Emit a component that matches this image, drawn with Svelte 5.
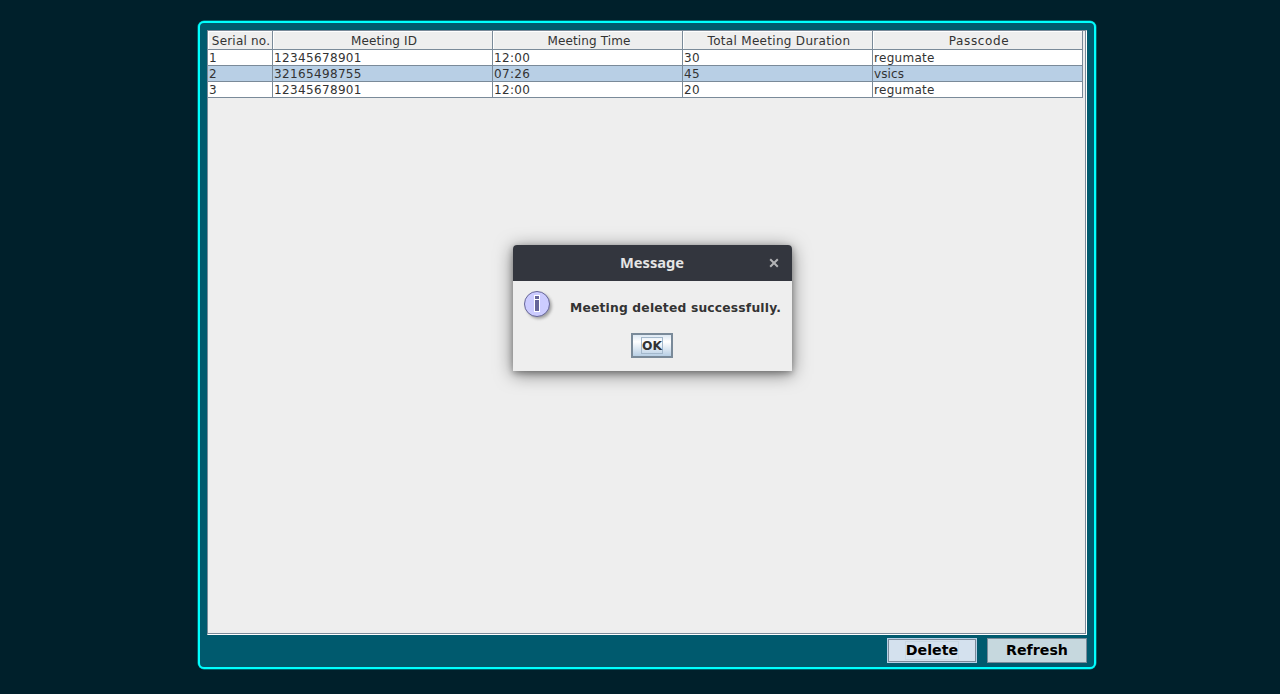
<script>
  const columns = [
    { title: 'Serial no.', spacing: 0.2 },
    { title: 'Meeting ID', spacing: 0.1 },
    { title: 'Meeting Time', spacing: 0.13 },
    { title: 'Total Meeting Duration', spacing: 0.3 },
    { title: 'Passcode', spacing: 0.65 }
  ];
  const rows = [
    ['1', '12345678901', '12:00', '30', 'regumate'],
    ['2', '32165498755', '07:26', '45', 'vsics'],
    ['3', '12345678901', '12:00', '20', 'regumate']
  ];
  let selected = $state(1);
</script>

<main>
  <section class="panel">
    <div class="scroll">
      <div class="view">
        <div class="grid head">
          {#each columns as c}
            <div class="th"><span style="letter-spacing:{c.spacing}px">{c.title}</span></div>
          {/each}
        </div>
        {#each rows as row, i}
          <div class="grid row" class:selected={i === selected}>
            {#each row as cell, j}
              <div class="td" class:num={j < 4}>{cell}</div>
            {/each}
          </div>
        {/each}
      </div>
    </div>
    <div class="actions">
      <button class="delete"><span>Delete</span></button>
      <button class="refresh"><span>Refresh</span></button>
    </div>
  </section>

  <div class="dialog" role="dialog" aria-label="Message">
    <header>
      <span class="title">Message</span>
      <svg class="close" width="10" height="10" viewBox="0 0 10 10"><path d="M1.2 1.2 8.8 8.8M8.8 1.2 1.2 8.8" stroke="#b3b4b6" stroke-width="2" fill="none" /></svg>
    </header>
    <div class="message">
      <svg width="32" height="32" viewBox="0 0 32 32">
        <defs>
          <filter id="soft" x="-30%" y="-30%" width="160%" height="160%"><feGaussianBlur stdDeviation="1.4" /></filter>
        </defs>
        <circle cx="16" cy="16" r="12.7" fill="#777" opacity=".65" filter="url(#soft)" />
        <circle cx="14" cy="14" r="12.5" fill="#ccccff" stroke="#666699" />
        <path d="M11 5h6v17h-6z" fill="#fff" />
        <path d="M12 6h4v3h-4zM12 10h4v11h-4z" fill="#666699" />
      </svg>
      <p>Meeting deleted successfully.</p>
    </div>
    <button class="ok"><span>OK</span></button>
  </div>
</main>

<style>
  :global(body) { margin: 0; background: #00202b; }
  main {
    position: relative;
    box-sizing: border-box;
    width: 1280px;
    height: 694px;
    padding: 21px 0 0 198px;
    overflow: hidden;
    background: #00202b;
    font-family: "DejaVu Sans", sans-serif;
    color: #333;
  }
  button { font-family: inherit; margin: 0; padding: 0; box-sizing: border-box; border-radius: 0; display: flex; align-items: center; justify-content: center; }
  .panel {
    box-sizing: border-box;
    width: 898px;
    height: 648px;
    border: 2px solid #00ffff;
    border-radius: 6px;
    background: #005a6e;
    padding: 7px 7px 0;
    box-shadow: 0 0 0 .5px #00a0a8;
  }
  .scroll {
    box-sizing: border-box;
    width: 880px;
    height: 605px;
    border-style: solid;
    border-width: 1px;
    border-color: #7a8a99 #fff #fff #7a8a99;
  }
  .view {
    box-sizing: border-box;
    height: 603px;
    border-right: 1px solid #7a8a99;
    border-bottom: 1px solid #7a8a99;
    background: #eee;
    font-size: 12px;
  }
  .grid { display: grid; grid-template-columns: 65px 220px 190px 190px 210px; width: 875px; }
  .th {
    box-sizing: border-box;
    height: 19px;
    border-right: 1px solid #7a8a99;
    border-bottom: 1px solid #7a8a99;
    box-shadow: inset 1px 1px #fff;
    text-align: center;
    line-height: 20px;
    white-space: nowrap;
    padding-left: 3px;
  }
  .th:first-child { padding-left: 2px; }
  .td {
    box-sizing: border-box;
    height: 16px;
    border-right: 1px solid #7a8a99;
    border-bottom: 1px solid #7a8a99;
    background: #fff;
    line-height: 16px;
    padding-left: 1px;
    letter-spacing: .3px;
    white-space: nowrap;
  }
  .num { letter-spacing: .35px; }
  .selected .td { background: #b8cfe5; }
  .selected .td:last-child { letter-spacing: .1px; }
  .actions { display: flex; justify-content: flex-end; gap: 10px; padding-top: 3px; }
  .actions button { height: 25px; font-size: 14.2px; font-weight: bold; color: #000; }
  .actions span { line-height: 17px; padding: 0; border: 1px solid #c9d8e4; }
  .delete { width: 90px; border: 2px solid #7a8a99; outline: 1px solid #b8cfe5; outline-offset: -1px; background: #d4e1ee; }
  .refresh { width: 100px; border: 1px solid #7a8a99; background: #c6d8de; }
  .actions .refresh span { border-color: #c5d6e0; }
  .dialog {
    position: absolute;
    left: 513px;
    top: 245px;
    width: 279px;
    height: 126px;
    border-radius: 4px 4px 0 0;
    background: #eee;
    box-shadow: 0 3px 18px rgba(0,0,0,.5), 0 2px 6px rgba(0,0,0,.3);
  }
  header { position: relative; display: flex; align-items: center; justify-content: center; height: 36px; border-radius: 4px 4px 0 0; background: #33363e; color: #e5e5e5; }
  .title { font: bold 14.67px/20px "Noto Sans", sans-serif; margin: 0 1px 2px 0; }
  .close { position: absolute; right: 13px; top: 13px; }
  .message { display: flex; height: 52px; padding: 9px 0 0 10px; box-sizing: border-box; }
  p { margin: 10px 0 0 15px; font-size: 12.3px; line-height: 16px; font-weight: bold; white-space: nowrap; letter-spacing: .19px; }
  .ok { width: 42px; height: 25px; margin-left: 118px; border: 2px solid #7a8a99; background: linear-gradient(#dde8f3, #fff 32%, #b8cfe5); color: #333; font-size: 12.3px; font-weight: bold; }
  .ok span { box-sizing: border-box; width: 22px; height: 17px; border: 1px solid #a3b8cc; line-height: 16px; }
</style>
